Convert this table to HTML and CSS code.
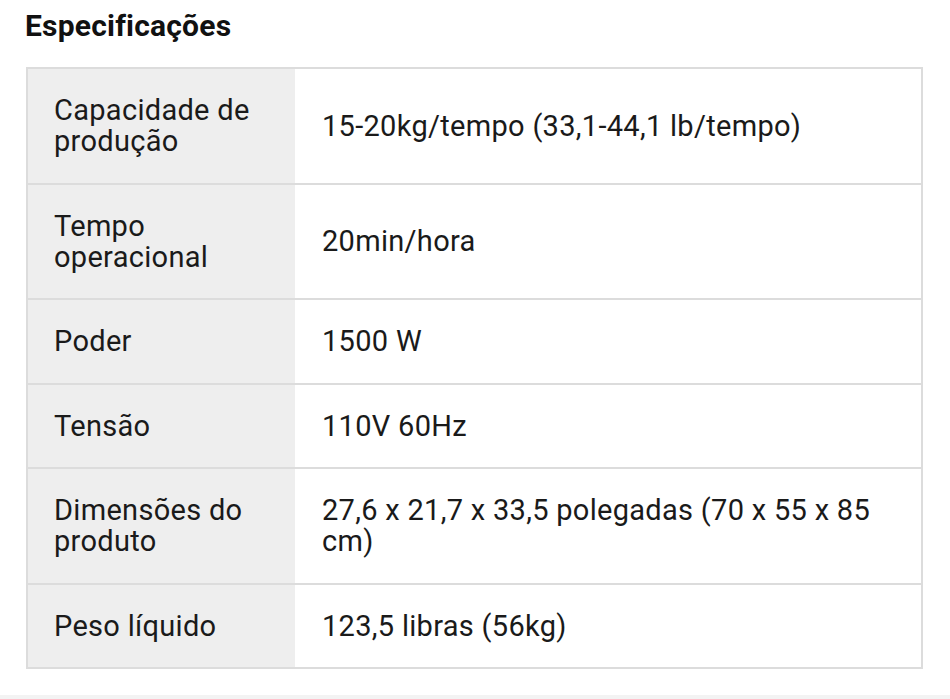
FILE: index.html
```html
<!DOCTYPE html>
<html lang="pt">
<head>
<meta charset="utf-8">
<link rel="stylesheet" href="styles.css">
</head>
<body>
<main class="page">
  <h2 class="title">Especificações</h2>
  <table class="specs">
    <tr><th>Capacidade de produção</th><td>15-20kg/tempo (33,1-44,1 lb/tempo)</td></tr>
    <tr><th>Tempo operacional</th><td>20min/hora</td></tr>
    <tr><th>Poder</th><td>1500 W</td></tr>
    <tr><th>Tensão</th><td>110V 60Hz</td></tr>
    <tr><th>Dimensões do produto</th><td>27,6 x 21,7 x 33,5 polegadas (70 x 55 x 85 cm)</td></tr>
    <tr><th>Peso líquido</th><td>123,5 libras (56kg)</td></tr>
  </table>
</main>
<div class="footer-band"></div>
</body>
</html>
```
FILE: styles.css
```css
html, body {
  margin: 0;
  padding: 0;
  background: #ffffff;
  font-family: Roboto, "Noto Sans", sans-serif;
  color: #1a1a1a;
}
.page {
  padding: 8px 27px 0 26px;
  height: 695px;
  box-sizing: border-box;
}
.title {
  margin: 0 0 23px -1px;
  font-size: 30px;
  letter-spacing: 0.2px;
  font-weight: 700;
  line-height: 36px;
  color: #111;
}
.specs {
  width: 897px;
  border-collapse: collapse;
  border: 2px solid #dcdcdc;
  font-size: 29px;
  letter-spacing: 0.3px;
  line-height: 31px;
}
.specs th, .specs td {
  border-top: 2px solid #dcdcdc;
  border-bottom: 2px solid #dcdcdc;
  padding: 26px 26px 25.5px 26px;
  text-align: left;
  vertical-align: middle;
  font-weight: 400;
}
.specs th {
  width: 215px;
  background: #eeeeee;
}
.specs td {
  background: #ffffff;
  padding-left: 27px;
}
.footer-band {
  height: 4px;
  background: #f3f3f3;
}
```
